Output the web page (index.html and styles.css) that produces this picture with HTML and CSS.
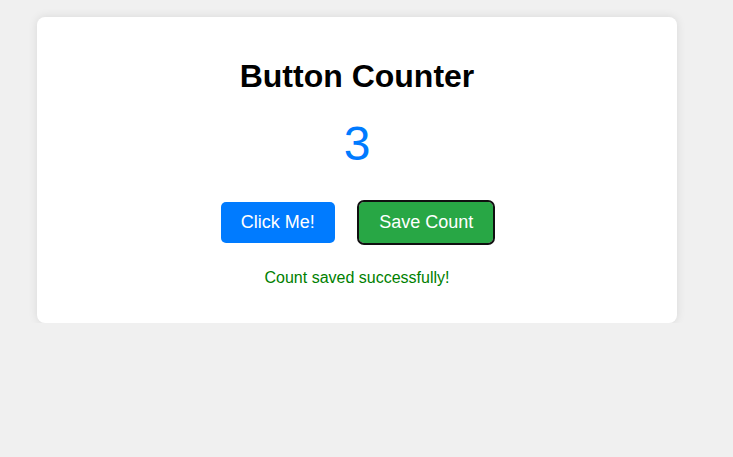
FILE: index.html
```html
<!DOCTYPE html>
<html lang="en">
<head>
<meta charset="utf-8">
<title>Button Counter</title>
<link rel="stylesheet" href="styles.css">
</head>
<body>
  <div class="card">
    <h1 class="title">Button Counter</h1>
    <div class="count">3</div>
    <div class="actions">
      <button class="btn btn-primary">Click Me!</button>
      <button class="btn btn-success is-focused">Save Count</button>
    </div>
    <p class="message">Count saved successfully!</p>
  </div>
</body>
</html>
```
FILE: styles.css
```css
html, body {
  margin: 0;
  padding: 0;
}
body {
  background: #f0f0f0;
  font-family: "Liberation Sans", Arial, sans-serif;
  padding: 17px 0 0 37px;
}
.card {
  width: 640px;
  box-sizing: border-box;
  background: #fff;
  border-radius: 8px;
  box-shadow: 0 0 10px rgba(0, 0, 0, 0.1);
  padding: 20px;
  text-align: center;
}
.title {
  font-size: 32px;
  font-weight: bold;
  margin: 21px 0;
  color: #000;
}
.count {
  font-size: 48px;
  color: #007bff;
  margin: 20px 0 21px;
}
.btn {
  font-family: "Liberation Sans", Arial, sans-serif;
  font-size: 18px;
  padding: 10px 20px;
  margin: 10px;
  border: none;
  border-radius: 5px;
  color: #fff;
  cursor: pointer;
}
.btn-primary {
  background: #007bff;
}
.btn-success {
  background: #28a745;
}
.is-focused {
  outline: 2px solid #101010;
  outline-offset: 0;
}
.message {
  color: #008000;
  font-size: 16px;
  margin: 16px 0 16px;
}
```
